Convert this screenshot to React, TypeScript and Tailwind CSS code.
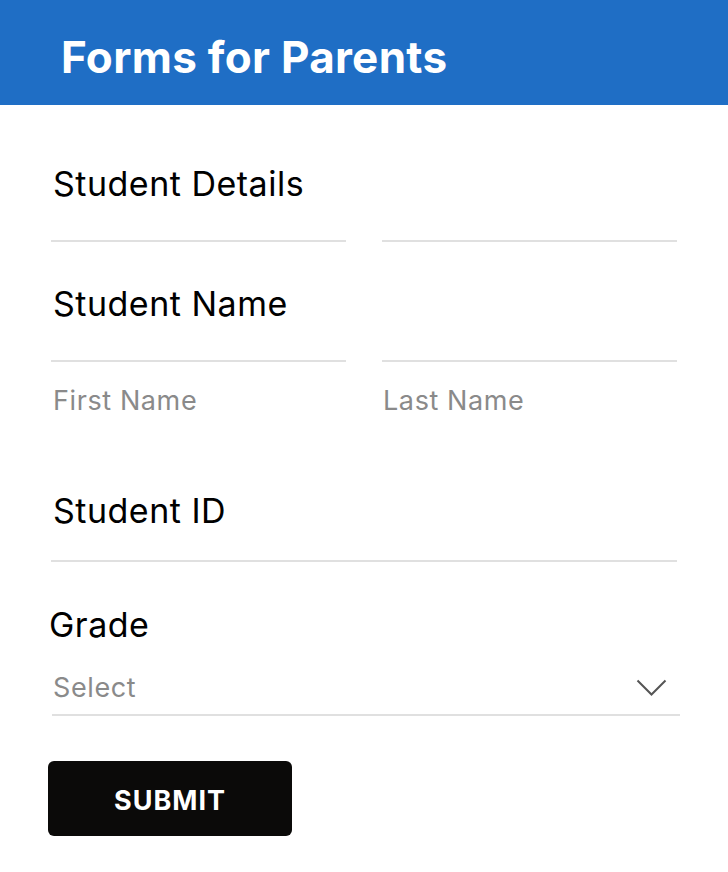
import React from "react";

export default function App() {
  const body = { fontFamily: "Inter, 'Liberation Sans', sans-serif" };
  const label = "text-[34px] leading-[36px] tracking-[0.5px] text-black";
  const ph = "text-[27px] leading-[32px] tracking-[0.6px] text-[#8a8a8a]";
  return (
    <div className="w-[728px] h-[872px] bg-white" style={body}>
      <div className="h-[105px] bg-[#1f6ec5] flex items-center pl-[61px] pt-[8px]">
        <h1 className="text-white text-[44px] font-bold leading-none tracking-[0.3px]">
          Forms for Parents
        </h1>
      </div>
      <div className="px-[51px]">
        <div className={`mt-[61px] pl-[2px] ${label}`}>Student Details</div>
        <div className="grid grid-cols-2 gap-[36px]">
          <div className="h-[40px] border-b-2 border-[#e0e0e0]" />
          <div className="h-[40px] border-b-2 border-[#e0e0e0]" />
        </div>
        <div className={`mt-[44px] pl-[2px] ${label}`}>Student Name</div>
        <div className="grid grid-cols-2 gap-[36px]">
          <div>
            <div className="h-[40px] border-b-2 border-[#e0e0e0]" />
            <div className={`mt-[23px] pl-[2px] ${ph}`}>First Name</div>
          </div>
          <div>
            <div className="h-[40px] border-b-2 border-[#e0e0e0]" />
            <div className={`mt-[23px] pl-[1px] ${ph}`}>Last Name</div>
          </div>
        </div>
        <div className={`mt-[76px] pl-[2px] ${label}`}>Student ID</div>
        <div className="h-[33px] border-b-2 border-[#e0e0e0]" />
        <div className={`mt-[45px] ml-[-2px] ${label}`}>Grade</div>
        <div className="mt-[29px] ml-[1px] mr-[-3px] pb-[10px] border-b-2 border-[#e0e0e0] flex items-center justify-between">
          <span className={`pl-[1px] ${ph}`}>Select</span>
          <svg width="31" height="18" viewBox="0 0 31 18" className="mr-[13px]">
            <path d="M1.5 1.5 L15.5 15.5 L29.5 1.5" fill="none" stroke="#555" strokeWidth="2" />
          </svg>
        </div>
        <button className="mt-[45px] ml-[-3px] w-[244px] h-[75px] pt-[5px] bg-[#0b0a09] rounded-[6px] text-white text-[27px] font-bold tracking-[1px]">
          SUBMIT
        </button>
      </div>
    </div>
  );
}
